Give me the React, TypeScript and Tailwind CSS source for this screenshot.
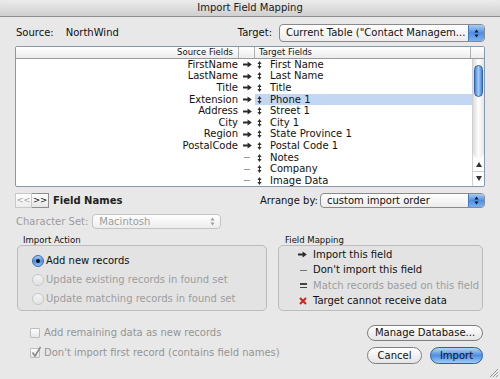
import React from 'react';

const rows: [string, string][] = [
  ['FirstName', 'First Name'],
  ['LastName', 'Last Name'],
  ['Title', 'Title'],
  ['Extension', 'Phone 1'],
  ['Address', 'Street 1'],
  ['City', 'City 1'],
  ['Region', 'State Province 1'],
  ['PostalCode', 'Postal Code 1'],
  ['', 'Notes'],
  ['', 'Company'],
  ['', 'Image Data'],
];

const MapArrow = () => (
  <svg width="9" height="7" viewBox="0 0 9 7">
    <path d="M0 2.4h4.6V0.4L8.8 3.5L4.6 6.6V4.6H0z" fill="#2b2b2b" />
  </svg>
);

const Handle = () => (
  <svg width="5" height="8" viewBox="0 0 5 8">
    <path d="M2.5 0L4.6 3H0.4z M0.4 5h4.2L2.5 8z" fill="#333" />
    <rect x="2" y="2.5" width="1" height="3" fill="#333" />
  </svg>
);

const Stepper = ({ color = '#1b1b1b' }: { color?: string }) => (
  <svg width="5" height="9" viewBox="0 0 5 9">
    <path d="M2.5 0.5L4.6 3.5H0.4z M0.4 5.5h4.2L2.5 8.5z" fill={color} />
  </svg>
);

// Aqua popup button
const Popup = ({ text, width, disabled }: { text: string; width: string; disabled?: boolean }) => (
  <div
    className={`flex items-stretch ${width} h-full rounded-[4px] border ${
      disabled ? 'border-[#c4c4c4] text-[#9c9c9c]' : 'border-[#8a8a8a] text-[#111]'
    } bg-gradient-to-b from-white to-[#ececec] overflow-hidden`}
  >
    <div className="flex-1 flex items-center pl-[6px] whitespace-nowrap overflow-hidden">{text}</div>
    {disabled ? (
      <div className="w-[16px] flex items-center justify-center">
        <Stepper color="#a0a0a0" />
      </div>
    ) : (
      <div className="w-[16px] flex items-center justify-center bg-gradient-to-b from-[#a9cdf7] via-[#4c8fe6] to-[#7ab2f2] border-l border-[#4a78b8]">
        <Stepper />
      </div>
    )}
  </div>
);

const Radio = ({ on, label }: { on?: boolean; label: string }) => (
  <div className="flex items-center h-[19px]">
    {on ? (
      <div className="w-[12px] h-[12px] rounded-full border border-[#3d6bb0] bg-gradient-to-b from-[#a8cdf6] via-[#4b8fe5] to-[#8fc0f5] flex items-center justify-center">
        <div className="w-[4px] h-[4px] rounded-full bg-[#111]" />
      </div>
    ) : (
      <div className="w-[12px] h-[12px] rounded-full border border-[#c6c6c6] bg-gradient-to-b from-[#f4f4f4] to-[#e2e2e2]" />
    )}
    <span className={`ml-[2px] ${on ? 'text-[#111]' : 'text-[#9d9d9d]'}`}>{label}</span>
  </div>
);

const Check = ({ checked, label }: { checked?: boolean; label: string }) => (
  <div className="flex items-center h-[20px]">
    <div className="relative w-[10px] h-[10px] border border-[#bdbdbd] bg-gradient-to-b from-white to-[#e6e6e6] rounded-[1px]">
      {checked && (
        <svg className="absolute left-[0px] top-[-3px]" width="11" height="12" viewBox="0 0 11 12">
          <path d="M1.5 6.5L4 10L9.5 1" stroke="#8a8a8a" strokeWidth="1.6" fill="none" />
        </svg>
      )}
    </div>
    <span className="ml-[4px] text-[#959595]">{label}</span>
  </div>
);

export default function App() {
  return (
    <div className="w-[500px] h-[379px] bg-[#e8e8e8] relative overflow-hidden font-['DejaVu_Sans',sans-serif] text-[10px] leading-none text-[#111]">
      {/* title bar */}
      <div className="h-[17px] flex items-center justify-center bg-gradient-to-b from-[#ececec] to-[#cfcfcf] border-b border-[#8f8f8f] rounded-t-[5px]">
        <span className="text-[10px] text-[#1a1a1a]">Import Field Mapping</span>
      </div>

      <div className="px-[15px]">
        {/* source / target */}
        <div className="flex items-center h-[18px] mt-[7px]">
          <div className="w-[226px] flex items-center pl-[1px]">
            <span>Source:</span>
            <span className="ml-[12px]">NorthWind</span>
          </div>
          <span>Target:</span>
          <div className="ml-[7px] h-full">
            <Popup text={'Current Table ("Contact Managem...'} width="w-[206px]" />
          </div>
        </div>

        {/* mapping table */}
        <div className="mt-[4px] h-[141px] w-[470px] border border-[#8797ad] rounded-[2px] bg-white overflow-hidden">
          <div className="grid grid-cols-[223px_16px_216px_12px] h-[12px] border-b border-[#9b9b9b] bg-gradient-to-b from-white to-[#ececec] text-[8.5px]">
            <div className="flex items-center justify-end pr-[5px] border-r border-[#b0b0b0]">Source Fields</div>
            <div className="border-r border-[#b0b0b0]" />
            <div className="flex items-center pl-[4px] border-r border-[#b0b0b0]">Target Fields</div>
            <div />
          </div>
          <div className="flex h-[127px]">
            <div className="w-[456px] overflow-hidden">
              {rows.map(([src, tgt], i) => (
                <div key={tgt} className="grid grid-cols-[223px_16px_217px] h-[11.6px]">
                  <div className="flex items-center justify-end pr-[1px]">{src}</div>
                  <div className="flex items-center justify-center">
                    {src ? <MapArrow /> : <div className="w-[6px] h-px bg-[#9a9a9a]" />}
                  </div>
                  <div className={`flex items-center pl-[2px] ${i === 3 ? 'bg-[#c3d7f5]' : ''}`}>
                    <Handle />
                    <span className="ml-[8px]">{tgt}</span>
                  </div>
                </div>
              ))}
            </div>
            {/* scrollbar */}
            <div className="w-[12px] flex flex-col border-l border-[#d0d0d0]">
              <div className="h-[99px] bg-gradient-to-r from-[#dcdcdc] via-white to-[#e6e6e6] relative rounded-b-[6px]">
                <div className="absolute left-[1px] top-[6px] w-[9px] h-[32px] rounded-full border border-[#2f62ad] bg-gradient-to-r from-[#4a87dc] via-[#a6cdf7] to-[#3f7fd8]" />
              </div>
              <div className="h-[14px] flex items-center justify-center border-b border-[#cfcfcf]">
                <svg width="6" height="5" viewBox="0 0 6 5"><path d="M3 0L6 5H0z" fill="#333" /></svg>
              </div>
              <div className="h-[13px] flex items-center justify-center">
                <svg width="6" height="5" viewBox="0 0 6 5"><path d="M0 0h6L3 5z" fill="#333" /></svg>
              </div>
            </div>
          </div>
        </div>

        {/* field names / arrange */}
        <div className="flex items-center h-[15px] mt-[6px]">
          <div className="w-[245px] shrink-0 flex items-center h-full">
            <div className="flex h-[15px]">
              <div className="w-[17px] flex items-center justify-center border border-[#c8c8c8] bg-gradient-to-b from-white to-[#ececec] text-[#a5a5a5] text-[8.5px]">&lt;&lt;</div>
              <div className="w-[17px] flex items-center justify-center border border-l-0 border-[#8e8e8e] bg-gradient-to-b from-white to-[#e6e6e6] text-[8.5px]">&gt;&gt;</div>
            </div>
            <span className="ml-[4px] font-bold text-[#222]">Field Names</span>
          </div>
          <span className="w-[60px] shrink-0 whitespace-nowrap">Arrange by:</span>
          <div className="h-full">
            <Popup text="custom import order" width="w-[165px]" />
          </div>
        </div>

        {/* character set */}
        <div className="flex items-center h-[15px] mt-[6px]">
          <span className="text-[#9c9c9c] pl-[1px]">Character Set:</span>
          <div className="ml-[4px] h-full">
            <Popup text="Macintosh" width="w-[129px]" disabled />
          </div>
        </div>

        {/* group boxes */}
        <div className="flex mt-[7px] text-[8.5px] h-[9px] items-center">
          <div className="w-[263px] pl-[8px]">Import Action</div>
          <div className="pl-[7px]">Field Mapping</div>
        </div>
        <div className="flex mt-[0px] h-[66px]">
          <div className="ml-[2px] w-[250px] border border-[#bcbcbc] rounded-[5px] bg-[#e3e3e3] pl-[14px] pt-[5px]">
            <Radio on label="Add new records" />
            <Radio label="Update existing records in found set" />
            <Radio label="Update matching records in found set" />
          </div>
          <div className="ml-[11px] w-[205px] border border-[#bcbcbc] rounded-[5px] bg-[#e3e3e3] pt-[1px]">
            {[
              { icon: <MapArrow />, label: 'Import this field' },
              { icon: <div className="w-[7px] h-px bg-[#777]" />, label: "Don't import this field" },
              {
                icon: (
                  <div className="flex flex-col gap-[2px]">
                    <div className="w-[7px] h-[1.5px] bg-[#444]" />
                    <div className="w-[7px] h-[1.5px] bg-[#444]" />
                  </div>
                ),
                label: 'Match records based on this field',
                gray: true,
              },
              {
                icon: (
                  <svg width="8" height="8" viewBox="0 0 8 8">
                    <path d="M1 1L7 7M7 1L1 7" stroke="#d62020" strokeWidth="2" />
                  </svg>
                ),
                label: 'Target cannot receive data',
              },
            ].map((it) => (
              <div key={it.label} className="flex items-center h-[15.5px]">
                <div className="w-[34px] flex justify-end pr-[6px]">{it.icon}</div>
                <span className={`${it.gray ? 'text-[#9d9d9d]' : 'text-[#111]'}`}>{it.label}</span>
              </div>
            ))}
          </div>
        </div>

        {/* bottom */}
        <div className="flex mt-[12px]">
          <div className="flex-1 pl-[15px]">
            <Check label="Add remaining data as new records" />
            <Check checked label="Don't import first record (contains field names)" />
          </div>
          <div className="w-[116px] mr-[2px] pt-[2px] flex flex-col items-end">
            <div className="w-[116px] h-[16px] rounded-full border border-[#7f7f7f] bg-gradient-to-b from-white to-[#e4e4e4] flex items-center justify-center">
              Manage Database...
            </div>
            <div className="flex mt-[6px] w-[116px] justify-between">
              <div className="w-[55px] h-[17px] rounded-full border border-[#7f7f7f] bg-gradient-to-b from-white to-[#e4e4e4] flex items-center justify-center">
                Cancel
              </div>
              <div className="w-[53px] h-[17px] rounded-full border border-[#2b5da8] bg-gradient-to-b from-[#b3d4f8] via-[#4b8ee4] to-[#a0cbf6] flex items-center justify-center">
                Import
              </div>
            </div>
          </div>
        </div>
      </div>

      {/* resize grip */}
      <svg className="absolute right-[1px] bottom-[1px]" width="11" height="11" viewBox="0 0 11 11">
        <path d="M10 2L2 10M10 5L5 10M10 8L8 10" stroke="#9a9a9a" strokeWidth="1" />
      </svg>
    </div>
  );
}
